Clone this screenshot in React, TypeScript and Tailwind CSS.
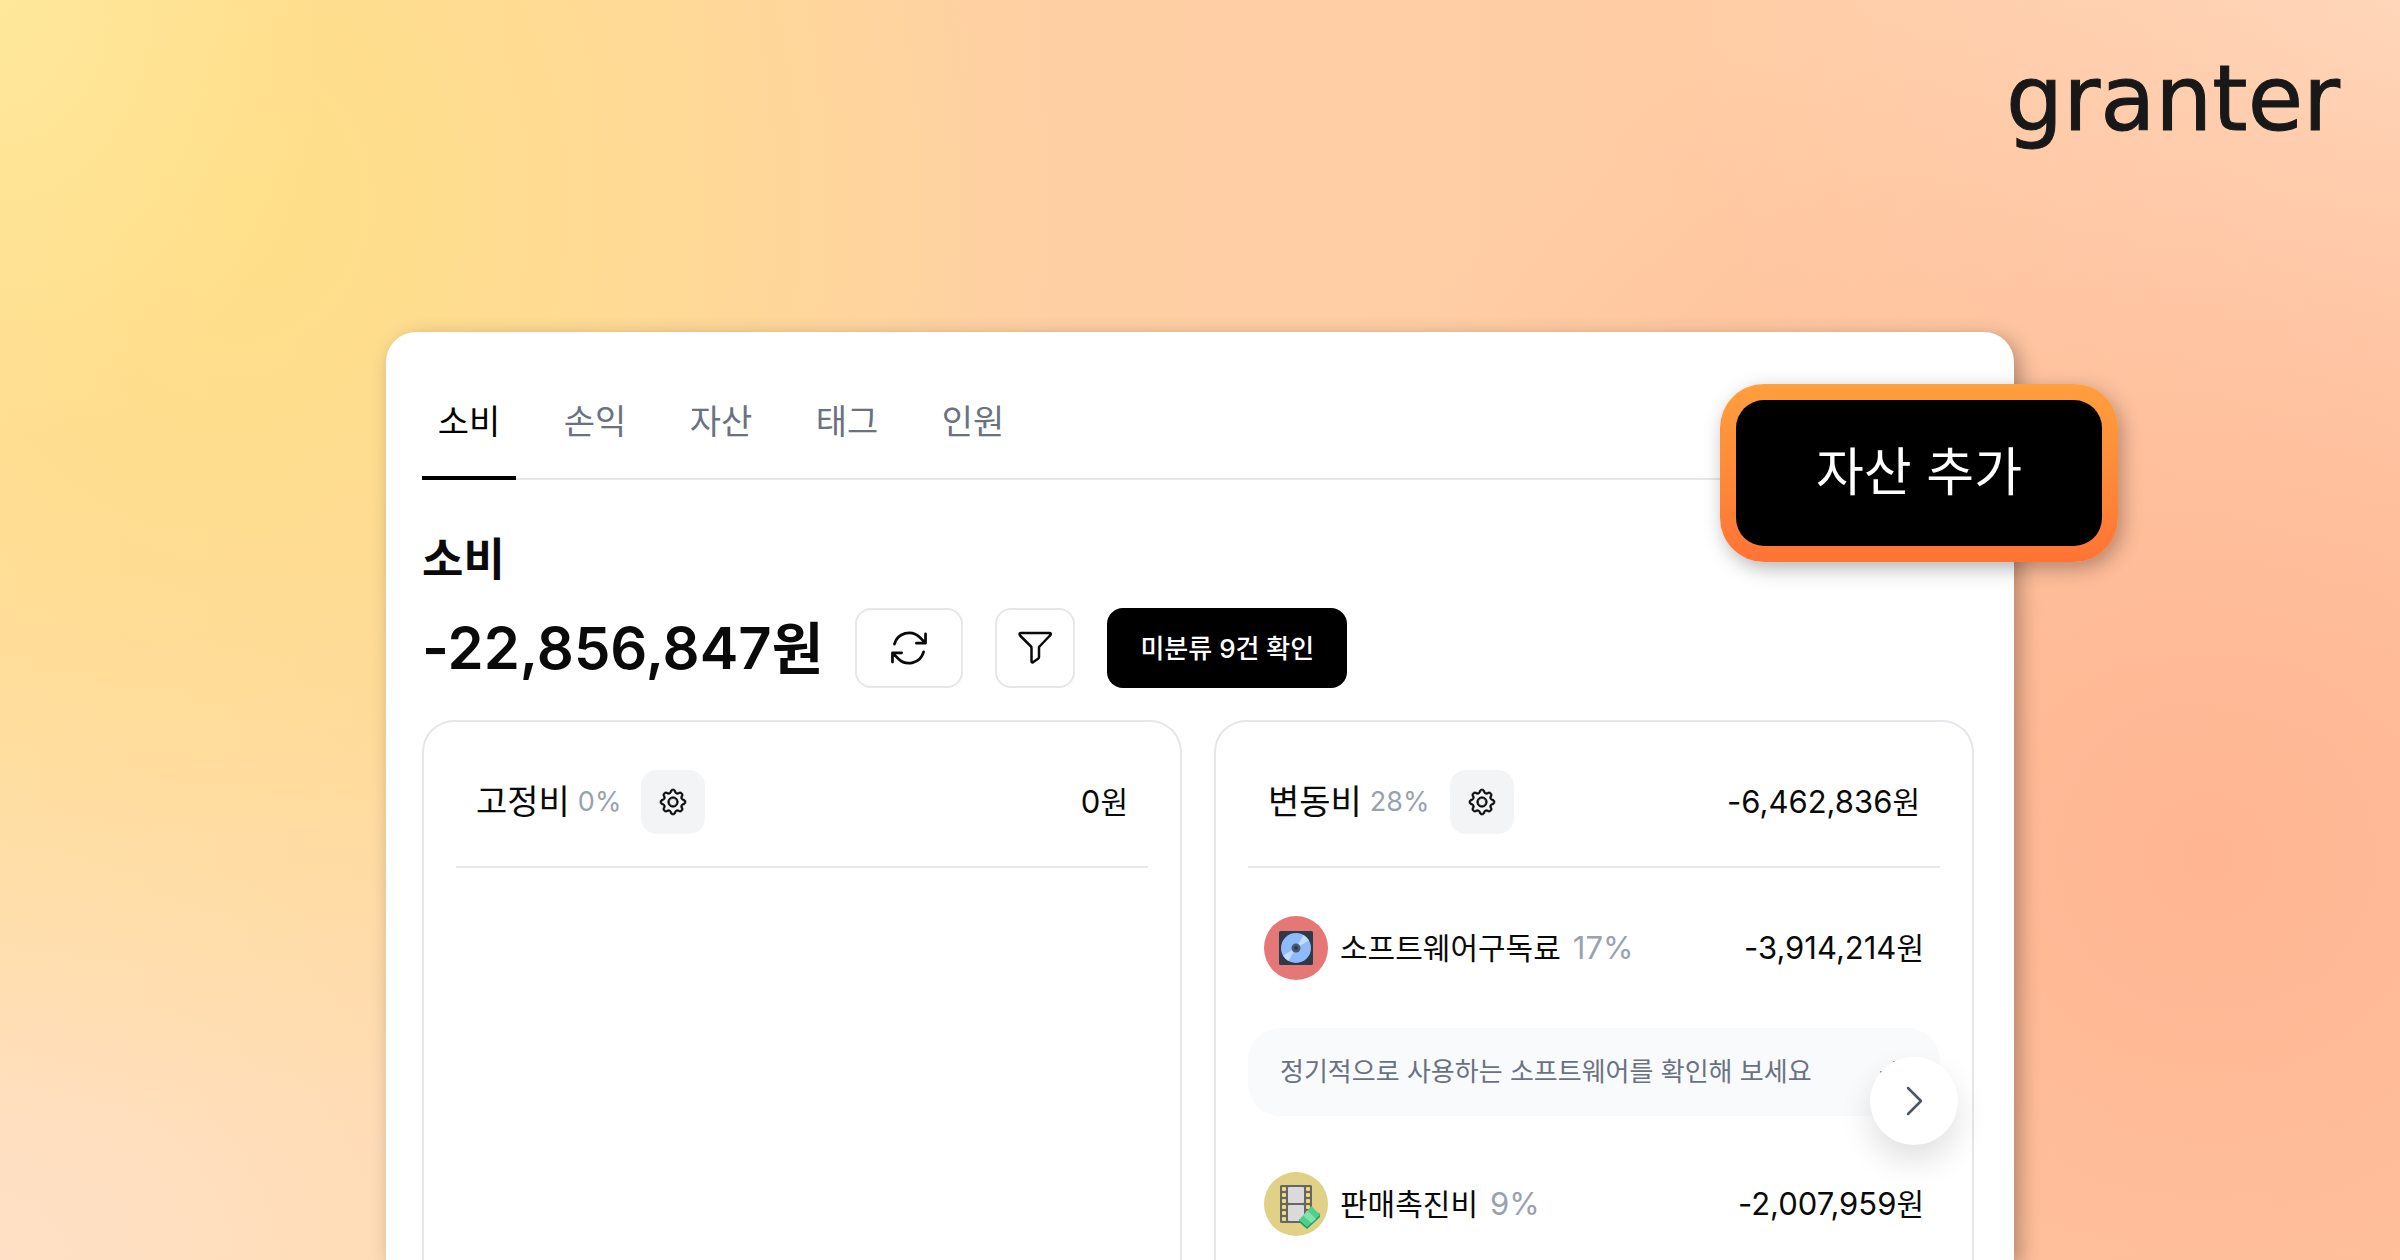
import React, { useState } from 'react';
import { HiOutlineArrowPath } from 'react-icons/hi2';
import { BsGear } from 'react-icons/bs';

const tabs = ['소비', '손익', '자산', '태그', '인원'];

const FunnelIcon = () => (
  <svg width="36" height="36" viewBox="0 0 36 36" fill="none" stroke="currentColor" strokeWidth="2.5" strokeLinejoin="round">
    <path d="M4 3H32.500Q34.500 3 33.500 5L32.500 6L22.500 16.500Q22 17 22 18V27Q22 28 21 28.800L16 32.300Q14.500 33 14.500 31V18Q14.500 17 14 16.500L3.500 6L2.800 5Q2 3 4 3Z" />
  </svg>
);

const ArrowIcon = () => (
  <svg width="28" height="28" viewBox="0 0 28 28" fill="none" stroke="currentColor" strokeWidth="2" strokeLinecap="round" strokeLinejoin="round">
    <path d="M1 14H25M14 4L25 14L14 24" />
  </svg>
);

const ChevronIcon = () => (
  <svg width="32" height="32" viewBox="0 0 32 32" fill="none" stroke="currentColor" strokeWidth="2.5" strokeLinecap="round" strokeLinejoin="round">
    <path d="M10 3L23 16L10 29" />
  </svg>
);

const DiscIcon = () => (
  <svg width="64" height="64" viewBox="0 0 64 64">
    <circle cx="32" cy="32" r="32" fill="#e57777" />
    <rect x="15" y="15" width="34" height="34" rx="1.500" fill="#2f3a49" />
    <circle cx="32" cy="32" r="15" fill="#8cbcfc" />
    <path d="M32 32L39.500 19A15 15 0 0 1 45 24.500Z" fill="#c3dbfd" />
    <path d="M32 32L24.500 45A15 15 0 0 1 19 39.500Z" fill="#c3dbfd" />
    <circle cx="32" cy="32" r="4.500" fill="#4c596c" />
    <circle cx="32" cy="32" r="2" fill="#2f3a49" />
  </svg>
);

const FilmIcon = () => (
  <svg width="64" height="64" viewBox="0 0 64 64">
    <circle cx="32" cy="32" r="32" fill="#e1d186" />
    <rect x="16" y="13" width="32" height="38" rx="1.500" fill="#666666" />
    <rect x="24" y="15" width="16" height="16" rx="1" fill="#dadada" />
    <rect x="24" y="33" width="16" height="16" rx="1" fill="#dadada" />
    {[15, 21, 27, 33, 39, 45].map((y) => (
      <g key={y} fill="#f0da7c">
        <rect x="18" y={y} width="4" height="4" rx="1" />
        <rect x="42" y={y} width="4" height="4" rx="1" />
      </g>
    ))}
    <path d="M35 48L48 38L56 42V45L43 57L35 50Z" fill="#179c62" />
    <path d="M35 48L47.500 34L56 43L43 55Z" fill="#4fcf8b" />
    <path d="M39 43.500L43.500 38.500L52 47L47.500 51Z" fill="#85dfae" />
  </svg>
);

const Amount = ({ value }: { value: string }) => (
  <span className="text-[31px] leading-10">
    {value}
    <span className="text-[30px]">원</span>
  </span>
);

const PanelHeader = ({ title, percent, amount }: { title: string; percent: string; amount: string }) => (
  <div className="flex items-center border-b-2 border-gray-200 px-5 pt-4 pb-8">
    <h2 className="text-[34px] leading-10">{title}</h2>
    <span className="ml-2 text-[27px] leading-10 text-gray-400">{percent}</span>
    <button type="button" aria-label="설정" className="mr-auto ml-5 flex size-16 items-center justify-center rounded-2xl bg-gray-100">
      <BsGear size={26} stroke="currentColor" strokeWidth={0.4} className="overflow-visible" />
    </button>
    <Amount value={amount} />
  </div>
);

const ExpenseRow = ({ icon, name, percent, amount }: { icon: React.ReactNode; name: string; percent: string; amount: string }) => (
  <div className="flex items-center px-4">
    {icon}
    <span className="ml-3 text-[30px] leading-10">{name}</span>
    <span className="mr-auto ml-3 text-[31px] leading-10 text-gray-400">{percent}</span>
    <Amount value={amount} />
  </div>
);

const App = () => {
  const [activeTab, setActiveTab] = useState('소비');

  return (
    <div className="relative flex h-screen flex-col overflow-hidden bg-[radial-gradient(40%_75%_at_92%_68%,#ffb592_0%,#ffb59200_100%),radial-gradient(14%_35%_at_0%_0%,#ffe89a_0%,#ffe89a00_100%),radial-gradient(34%_75%_at_10%_16%,#ffdf88_0%,#ffdf8800_100%),radial-gradient(40%_60%_at_0%_100%,#ffe0c6_0%,#ffe0c600_100%),radial-gradient(30%_60%_at_100%_0%,#ffd9bd_0%,#ffd9bd00_100%),linear-gradient(90deg,#ffdba0_0%,#ffcfa4_45%,#ffc9a4_100%)] font-['Inter','Noto_Sans_CJK_KR',sans-serif] text-[#0a0a0a]">
      <header className="flex h-[332px] shrink-0 justify-end px-15 pt-12">
        <div className="font-['DejaVu_Sans',sans-serif] text-[90px] leading-[102px] text-[#181818] [-webkit-text-stroke:1px_#181818]">granter</div>
      </header>

      <main className="relative mx-auto flex w-full max-w-[1628px] flex-1 flex-col rounded-t-[30px] bg-white pt-12 pr-10 pl-9 shadow-[6px_6px_20px_rgba(0,0,0,0.3)]">
        <nav className="flex gap-8 border-b-2 border-gray-200">
          {tabs.map((tab) => (
            <button
              key={tab}
              type="button"
              onClick={() => setActiveTab(tab)}
              className={`-mb-0.5 w-[94px] border-b-4 pt-[18px] pb-[30px] text-[34px] leading-12 ${activeTab === tab ? 'border-black text-black' : 'border-transparent text-gray-500'}`}
            >
              {tab}
            </button>
          ))}
        </nav>

        <h1 className="mt-12 text-[45px] leading-16 font-bold">소비</h1>
        <div className="mt-4 flex h-20 items-center gap-8">
          <p className="text-[58px] leading-20 font-semibold">
            -22,856,847<span className="text-[56px]">원</span>
          </p>
          <button type="button" aria-label="새로고침" className="flex h-20 w-[108px] items-center justify-center rounded-2xl border-2 border-gray-200">
            <HiOutlineArrowPath size={44} />
          </button>
          <button type="button" aria-label="필터" className="flex size-20 items-center justify-center rounded-2xl border-2 border-gray-200">
            <FunnelIcon />
          </button>
          <button type="button" className="h-20 w-60 rounded-2xl bg-black text-[26px] font-medium text-white">
            미분류 9건 확인
          </button>
        </div>

        <div className="mt-8 grid flex-1 grid-cols-2 gap-8">
          <section className="rounded-t-[32px] border-2 border-b-0 border-gray-200 px-8 pt-8">
            <PanelHeader title="고정비" percent="0%" amount="0" />
          </section>

          <section className="relative rounded-t-[32px] border-2 border-b-0 border-gray-200 px-8 pt-8">
            <PanelHeader title="변동비" percent="28%" amount="-6,462,836" />
            <div className="pt-12">
              <ExpenseRow icon={<DiscIcon />} name="소프트웨어구독료" percent="17%" amount="-3,914,214" />
              <a href="#software" className="mt-12 mb-14 flex h-[88px] items-center justify-between rounded-[32px] bg-gray-50 px-8 text-[26px] leading-10 text-gray-500">
                정기적으로 사용하는 소프트웨어를 확인해 보세요
                <ArrowIcon />
              </a>
              <ExpenseRow icon={<FilmIcon />} name="판매촉진비" percent="9%" amount="-2,007,959" />
            </div>
            <button type="button" aria-label="다음" className="absolute top-[335px] right-3.5 flex size-[88px] items-center justify-center rounded-full bg-white text-gray-600 shadow-[0_16px_32px_rgba(0,0,0,0.12)]">
              <ChevronIcon />
            </button>
          </section>
        </div>

        <div className="absolute top-[52px] -right-[104px] rounded-[44px] bg-linear-to-b from-[#ff9f3d] to-[#ff7335] p-4 shadow-[4px_6px_20px_rgba(0,0,0,0.3)]">
          <button type="button" className="h-[146px] w-[366px] rounded-[28px] bg-black text-[52px] text-white">
            자산 추가
          </button>
        </div>
      </main>
    </div>
  );
};

export default App;
